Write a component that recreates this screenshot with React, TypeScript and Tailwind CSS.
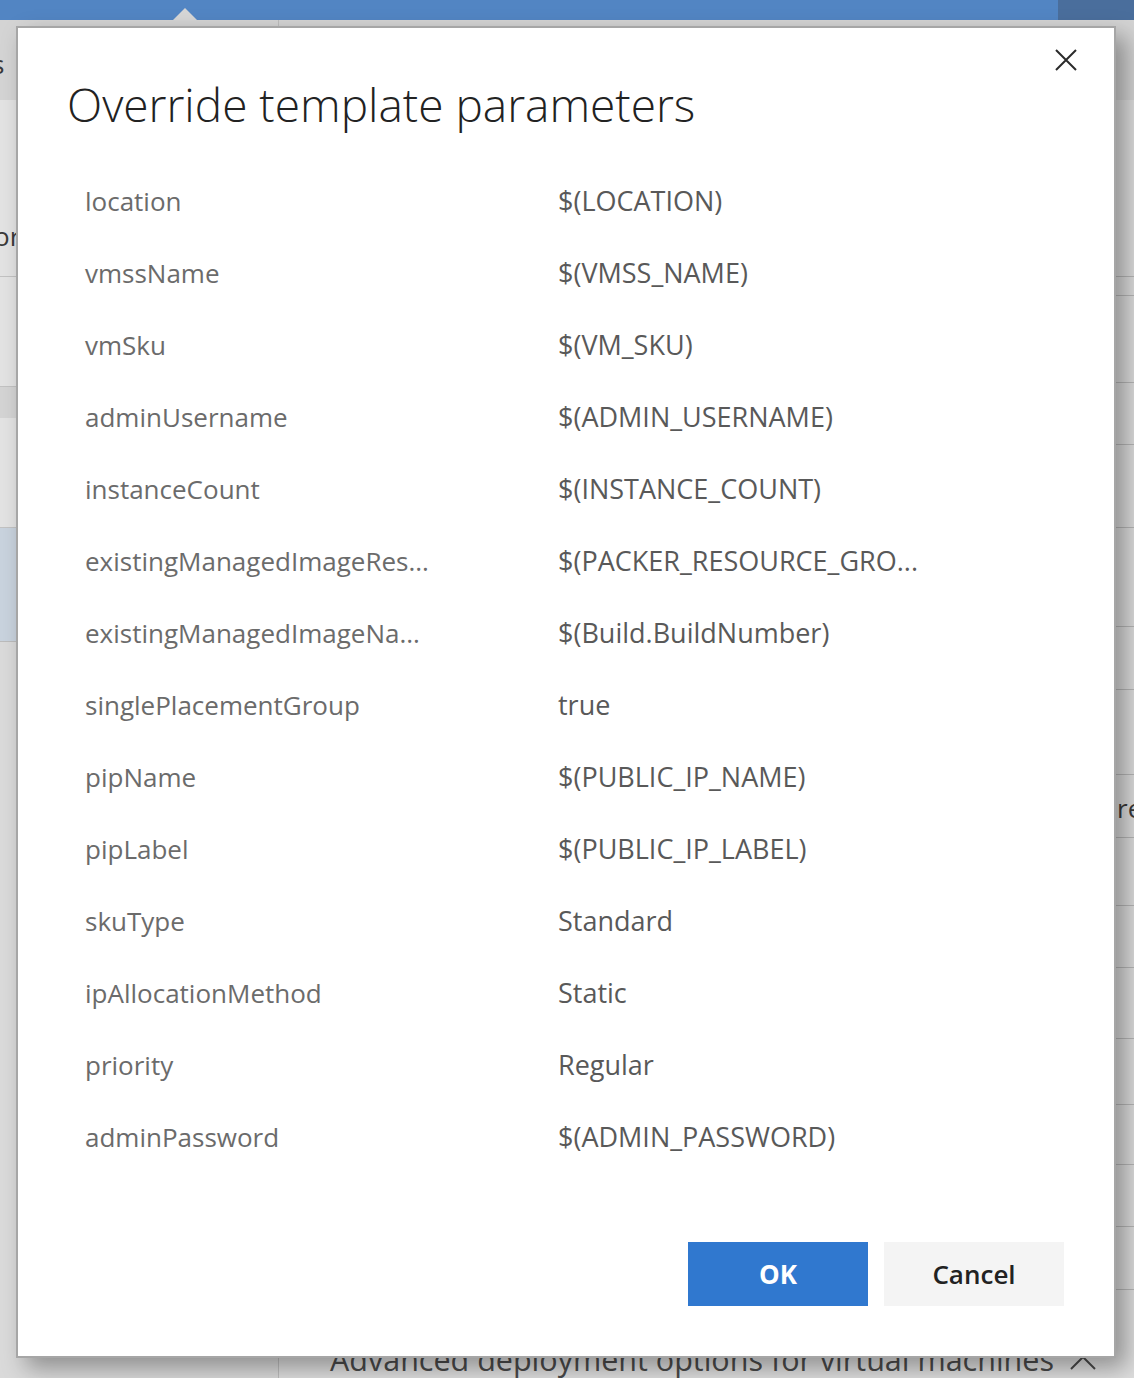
type Param = { name: string; value: string };

const params: Param[] = [
  { name: "location", value: "$(LOCATION)" },
  { name: "vmssName", value: "$(VMSS_NAME)" },
  { name: "vmSku", value: "$(VM_SKU)" },
  { name: "adminUsername", value: "$(ADMIN_USERNAME)" },
  { name: "instanceCount", value: "$(INSTANCE_COUNT)" },
  { name: "existingManagedImageRes...", value: "$(PACKER_RESOURCE_GRO..." },
  { name: "existingManagedImageNa...", value: "$(Build.BuildNumber)" },
  { name: "singlePlacementGroup", value: "true" },
  { name: "pipName", value: "$(PUBLIC_IP_NAME)" },
  { name: "pipLabel", value: "$(PUBLIC_IP_LABEL)" },
  { name: "skuType", value: "Standard" },
  { name: "ipAllocationMethod", value: "Static" },
  { name: "priority", value: "Regular" },
  { name: "adminPassword", value: "$(ADMIN_PASSWORD)" },
];

// heights of the rows in the page behind the dialog (right column)
const rightRows = [177, 19, 87, 62, 83, 99, 63, 85, 63, 68, 62, 71, 66, 60, 62, 63];

function TopBar() {
  return (
    <div className="relative flex h-[20px]">
      <div className="flex-1 bg-[#5285c3]" />
      <div className="w-[76px] bg-[#4a6e9c]" />
      <div className="absolute left-[173px] top-[8px] h-0 w-0 border-x-[12px] border-b-[12px] border-x-transparent border-b-[#d6d6d6]" />
    </div>
  );
}

function LeftPanel() {
  return (
    <div className="flex w-[279px] shrink-0 flex-col border-r border-[#bdbdbd] text-[26px] text-[#3a3a3a]">
      <div className="h-[80px] bg-[#d4d4d4] pt-[26px] leading-[36px]">
        <span className="ml-[-8px]">s</span>
      </div>
      <div className="h-[177px] border-b border-[#c2c2c2] bg-[#e3e3e3] pt-[118px] leading-[36px]">
        <span className="ml-[-6px]">or</span>
      </div>
      <div className="h-[110px] border-b border-[#c2c2c2] bg-[#e3e3e3]" />
      <div className="h-[31px] bg-[#d4d4d4]" />
      <div className="h-[110px] border-b border-[#c2c2c2] bg-[#e3e3e3]" />
      <div className="h-[114px] border-b border-[#bcbcbc] bg-[#c9d3de]" />
      <div className="flex-1 bg-[#dadada]" />
    </div>
  );
}

function RightPanel() {
  return (
    <div className="flex min-w-0 flex-1 flex-col text-[#3a3a3a]">
      <div className="h-[80px] shrink-0 bg-[#d4d4d4]" />
      {rightRows.map((h, i) => (
        <div
          key={i}
          style={{ height: h }}
          className="shrink-0 whitespace-nowrap border-b border-[#b8b8b8] bg-[#dedede] pl-[838px] text-[26px] leading-[36px]"
        >
          {i === 8 && <span className="relative top-[15px]">re</span>}
        </div>
      ))}
      <div className="flex flex-1 items-end gap-[16px] whitespace-nowrap bg-[#dedede] pl-[51px]">
        <span className="text-[30.5px] leading-[38px] text-[#4a4a4a]">Advanced deployment options for virtual machines</span>
        <svg width="26" height="14" viewBox="0 0 26 14" fill="none" stroke="#4a4a4a" strokeWidth="2" className="mb-[8px] shrink-0">
          <path d="M1 13L13 1L25 13" />
        </svg>
      </div>
    </div>
  );
}

function CloseIcon() {
  return (
    <svg width="22" height="22" viewBox="0 0 22 22" fill="none" stroke="currentColor" strokeWidth="2">
      <path d="M1 1L21 21M21 1L1 21" />
    </svg>
  );
}

function Dialog() {
  return (
    <div className="absolute left-[16px] top-[26px] flex h-[1332px] w-[1100px] flex-col border-2 border-[#a6a6a6] bg-white shadow-[10px_10px_22px_rgba(0,0,0,0.35)]">
      <div className="flex items-start justify-between pl-[49px] pr-[37px] pt-[21px]">
        <h1 className="mt-[27px] text-[46px] font-light leading-[56px] text-[#222]">Override template parameters</h1>
        <button className="text-[#2b2b2b]" aria-label="Close">
          <CloseIcon />
        </button>
      </div>

      <div className="mt-[33px] flex flex-col pl-[67px]">
        {params.map((p) => (
          <div key={p.name} className="flex h-[72px] items-center leading-[36px]">
            <div className="w-[473px] whitespace-nowrap text-[26px] text-[#6b6b6b]">{p.name}</div>
            <div className="whitespace-nowrap text-[27px] text-[#595959]">{p.value}</div>
          </div>
        ))}
      </div>

      <div className="mt-auto flex justify-end gap-[16px] pb-[50px] pr-[50px]">
        <button className="h-[64px] w-[180px] bg-[#3078cf] text-[26px] font-bold text-white">OK</button>
        <button className="h-[64px] w-[180px] bg-[#f4f4f4] text-[26px] font-semibold text-[#222]">Cancel</button>
      </div>
    </div>
  );
}

export default function App() {
  return (
    <div className="relative h-[1378px] w-[1134px] overflow-hidden bg-[#dcdcdc] font-['Open_Sans','Noto_Sans',sans-serif]">
      <TopBar />
      <div className="flex h-[1358px]">
        <LeftPanel />
        <RightPanel />
      </div>
      <Dialog />
    </div>
  );
}
